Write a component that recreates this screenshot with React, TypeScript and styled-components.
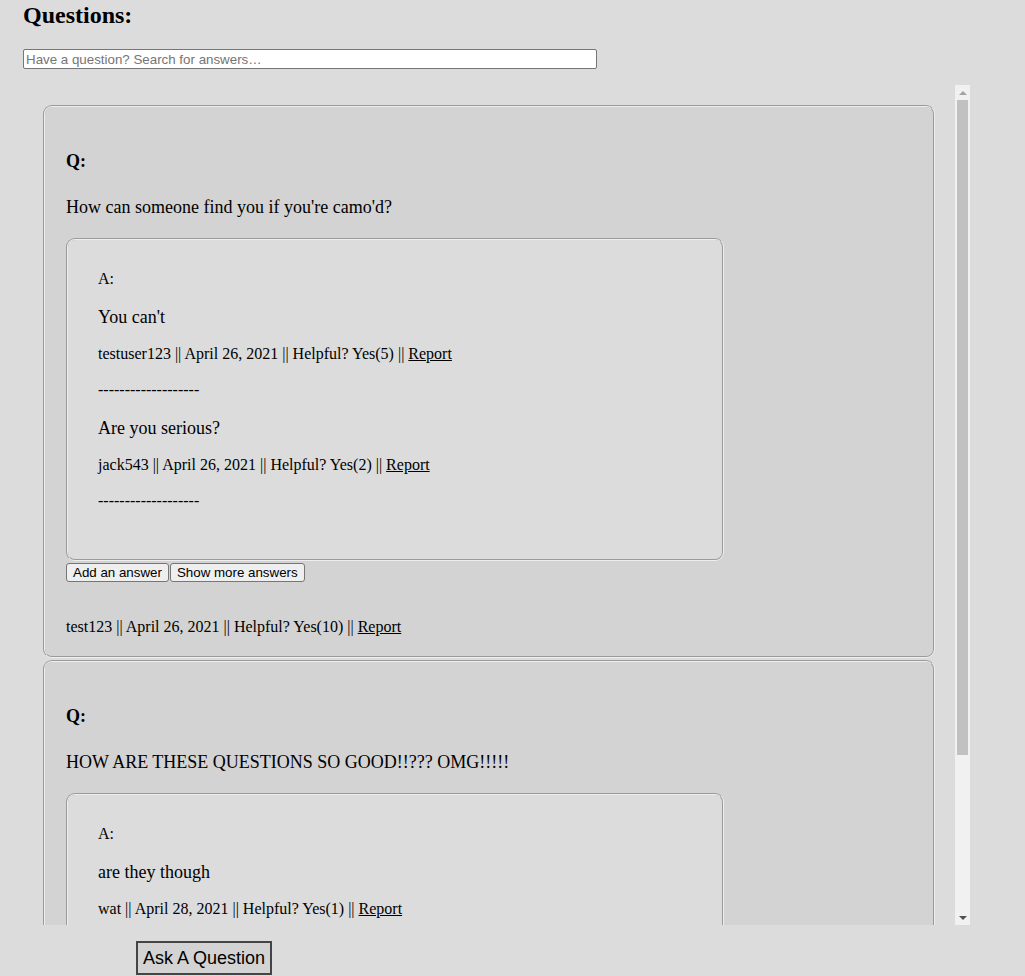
import React from "react";
import styled, { createGlobalStyle } from "styled-components";

interface IAnswer {
  body: string;
  user: string;
  date: string;
  helpful: number;
}

interface IQuestion {
  body: string;
  user: string;
  date: string;
  helpful: number;
  answers: IAnswer[];
}

const GlobalStyle = createGlobalStyle`
  html, body {
    margin: 0;
    padding: 0;
    background: gainsboro;
  }
  body {
    font-family: "Liberation Serif", "Times New Roman", serif;
    color: #000;
  }
`;

const Page = styled.div`
  padding: 1px 0 0 23px;
`;

const Title = styled.h2`
  margin: 0;
  font-size: 24px;
  line-height: 28px;
  font-weight: bold;
`;

const SearchInput = styled.input`
  display: block;
  box-sizing: border-box;
  width: 574px;
  height: 20px;
  margin-top: 20px;
  padding: 1px 2px;
  border: 1px solid #767676;
  border-radius: 2px;
  background: #fff;
  font-family: "Liberation Sans", Arial, sans-serif;
  font-size: 13.333px;
  &::placeholder {
    color: #757575;
  }
`;

const ListFrame = styled.div`
  display: flex;
  width: 947px;
  height: 840px;
  margin-top: 16px;
`;

const QuestionList = styled.div`
  flex: 1;
  box-sizing: border-box;
  padding: 20px;
  overflow-y: auto;
  scrollbar-width: none;
  &::-webkit-scrollbar {
    display: none;
  }
`;

// classic scrollbar drawn beside the list
const ScrollBar = styled.div`
  display: flex;
  flex-direction: column;
  width: 15px;
  background: #f1f1f1;
`;

const ScrollArrow = styled.div<{ $down?: boolean }>`
  display: flex;
  align-items: center;
  justify-content: center;
  height: 15px;
  &::after {
    content: "";
    width: 0;
    height: 0;
    border-left: 4px solid transparent;
    border-right: 4px solid transparent;
    ${(p) =>
      p.$down
        ? "border-top: 4px solid #505050;"
        : "border-bottom: 4px solid #a3a3a3;"}
  }
`;

const ScrollTrack = styled.div`
  flex: 1;
  padding: 0 2px;
`;

const ScrollThumb = styled.div`
  height: 655px;
  background: #c1c1c1;
`;

const QuestionCard = styled.div`
  padding: 20px 20px 19px 21px;
  margin-bottom: 2px;
  border: 2px groove #eee;
  border-radius: 9px;
  background: lightgray;
`;

const QLabel = styled.div`
  margin-top: 23px;
  font-size: 18px;
  line-height: 22px;
  font-weight: bold;
`;

const QBody = styled.div`
  margin-top: 24px;
  font-size: 18px;
  line-height: 22px;
`;

const AnswerBox = styled.div`
  width: 658px;
  box-sizing: border-box;
  margin-top: 20px;
  padding: 29px 30px 48px;
  border: 2px groove #eee;
  border-radius: 9px;
  background: gainsboro;
`;

const ALabel = styled.div`
  font-size: 16px;
  line-height: 20px;
`;

const AnswerBody = styled.div`
  margin-top: 17px;
  font-size: 18px;
  line-height: 22px;
`;

const Meta = styled.div<{ $gap: number }>`
  margin-top: ${(p) => p.$gap}px;
  font-size: 16px;
  line-height: 20px;
  white-space: nowrap;
`;

const ReportLink = styled.a`
  color: inherit;
  text-decoration: underline;
  cursor: pointer;
`;

const Divider = styled.div`
  margin-top: 16px;
  font-size: 16px;
  line-height: 20px;
`;

const ButtonRow = styled.div`
  display: flex;
  gap: 1px;
  margin-top: 2px;
`;

const SmallButton = styled.button`
  font-family: "Liberation Sans", Arial, sans-serif;
  font-size: 13.333px;
  line-height: 15px;
  padding: 1px 6px;
  border: 1px solid #767676;
  border-radius: 3px;
  background: #efefef;
  color: #000;
`;

const AskButton = styled.button`
  display: block;
  margin: 16px 0 0 113px;
  padding: 5px 5px 4px;
  font-family: "Liberation Sans", Arial, sans-serif;
  font-size: 18px;
  line-height: 21px;
  border: 2px solid #444;
  background: lightgray;
  color: #000;
`;

const questions: IQuestion[] = [
  {
    body: "How can someone find you if you're camo'd?",
    user: "test123",
    date: "April 26, 2021",
    helpful: 10,
    answers: [
      { body: "You can't", user: "testuser123", date: "April 26, 2021", helpful: 5 },
      { body: "Are you serious?", user: "jack543", date: "April 26, 2021", helpful: 2 },
    ],
  },
  {
    body: "HOW ARE THESE QUESTIONS SO GOOD!!??? OMG!!!!!",
    user: "jack543",
    date: "April 27, 2021",
    helpful: 4,
    answers: [
      { body: "are they though", user: "wat", date: "April 28, 2021", helpful: 1 },
    ],
  },
];

const MetaLine = ({ user, date, helpful, gap }: { user: string; date: string; helpful: number; gap: number }) => (
  <Meta $gap={gap}>
    {user} || {date} || Helpful? Yes({helpful}) || <ReportLink>Report</ReportLink>
  </Meta>
);

const Question = ({ q }: { q: IQuestion }) => (
  <QuestionCard>
    <QLabel>Q:</QLabel>
    <QBody>{q.body}</QBody>
    <AnswerBox>
      <ALabel>A:</ALabel>
      {q.answers.map((a, i) => (
        <React.Fragment key={i}>
          <AnswerBody>{a.body}</AnswerBody>
          <MetaLine user={a.user} date={a.date} helpful={a.helpful} gap={16} />
          <Divider>-------------------</Divider>
        </React.Fragment>
      ))}
    </AnswerBox>
    <ButtonRow>
      <SmallButton>Add an answer</SmallButton>
      <SmallButton>Show more answers</SmallButton>
    </ButtonRow>
    <MetaLine user={q.user} date={q.date} helpful={q.helpful} gap={35} />
  </QuestionCard>
);

export default function App() {
  return (
    <>
      <GlobalStyle />
      <Page>
        <Title>Questions:</Title>
        <SearchInput placeholder="Have a question? Search for answers…" />
        <ListFrame>
          <QuestionList>
            {questions.map((q, i) => (
              <Question key={i} q={q} />
            ))}
          </QuestionList>
          <ScrollBar>
            <ScrollArrow />
            <ScrollTrack>
              <ScrollThumb />
            </ScrollTrack>
            <ScrollArrow $down />
          </ScrollBar>
        </ListFrame>
        <AskButton>Ask A Question</AskButton>
      </Page>
    </>
  );
}
